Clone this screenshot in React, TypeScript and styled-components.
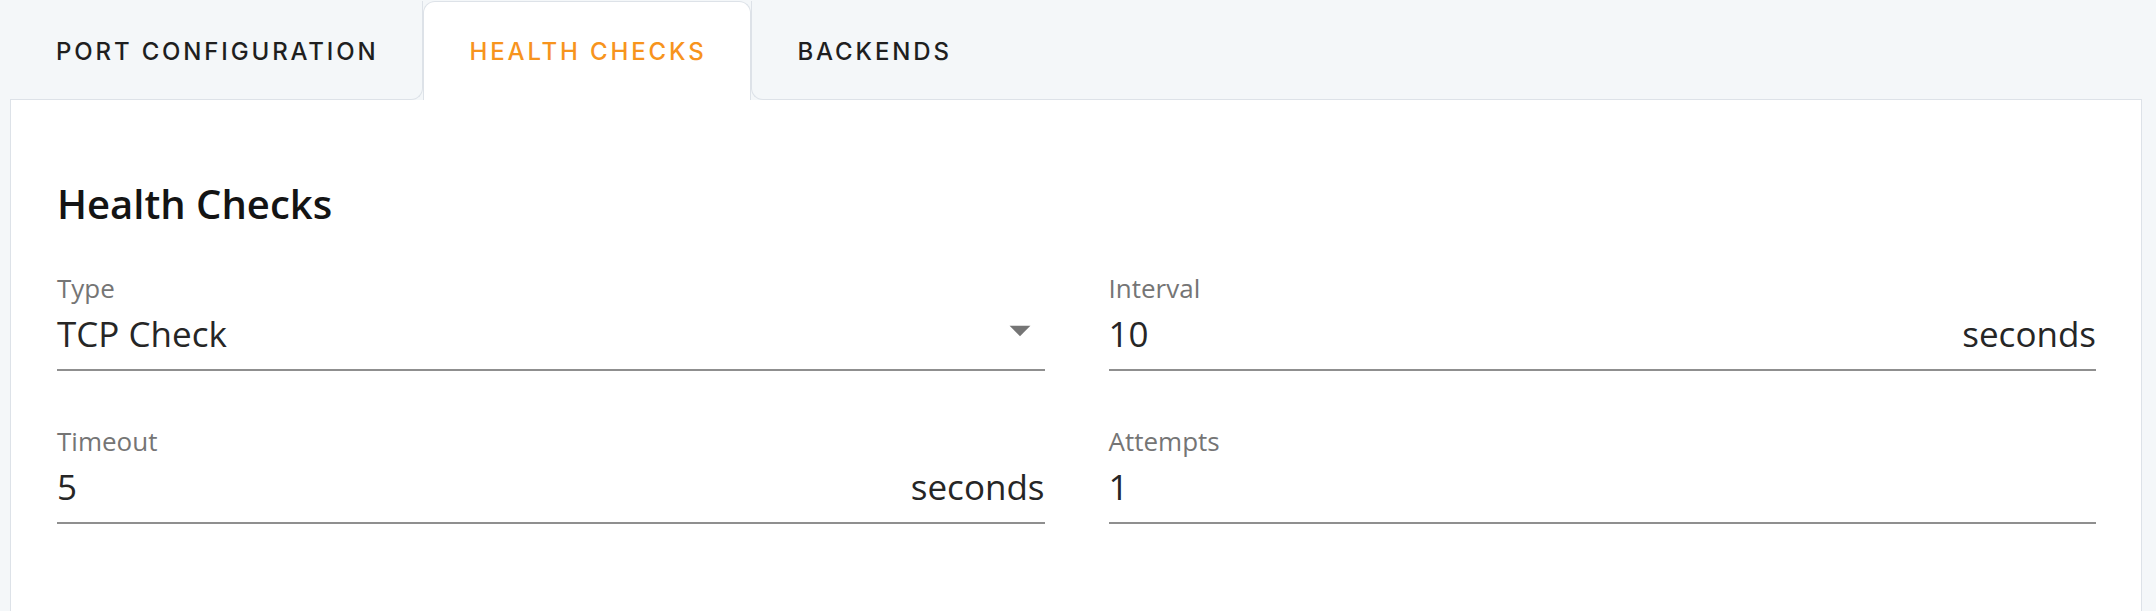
import React, { FC } from 'react';
import styled, { createGlobalStyle, css } from 'styled-components';

const colors = {
  page: '#f4f7f9',
  border: '#dde2e8',
  accent: '#f7941d',
  tabText: '#1f1f1f',
  heading: '#141414',
  value: '#262626',
  label: '#757575',
  underline: '#8f8f8f',
};

const GlobalStyle = createGlobalStyle`
  html, body {
    margin: 0;
    padding: 0;
    background: ${colors.page};
    overflow: hidden;
  }
  * {
    box-sizing: border-box;
  }
`;

const Page = styled.div`
  padding: 0 14px 0 10px;
  font-family: 'Open Sans', 'Noto Sans', sans-serif;
`;

const TabBar = styled.div`
  display: flex;
  height: 100px;
  padding-top: 1px;
`;

type TabProps = { $active?: boolean; $beforeActive?: boolean; $afterActive?: boolean };

const Tab = styled.div<TabProps>`
  height: 99px;
  padding: 37px 43px 0 46px;
  font-family: 'Inter', 'DejaVu Sans', sans-serif;
  font-size: 24px;
  font-weight: 500;
  line-height: 28px;
  letter-spacing: 2.85px;
  text-transform: uppercase;
  white-space: nowrap;
  color: ${colors.tabText};
  border-bottom: 1px solid ${colors.border};
  cursor: pointer;

  ${(p) =>
    p.$beforeActive &&
    css`
      border-right: 1px solid ${colors.border};
      border-bottom-right-radius: 12px;
    `}

  ${(p) =>
    p.$afterActive &&
    css`
      border-left: 1px solid ${colors.border};
      border-bottom-left-radius: 12px;
    `}

  ${(p) =>
    p.$active &&
    css`
      padding-top: 36px;
      background: #fff;
      color: ${colors.accent};
      border: 1px solid ${colors.border};
      border-bottom: none;
      border-radius: 12px 12px 0 0;
    `}
`;

const TabFiller = styled.div`
  flex: 1;
  border-bottom: 1px solid ${colors.border};
`;

const Panel = styled.div`
  min-height: 620px;
  background: #fff;
  border: 1px solid ${colors.border};
  border-top: none;
  padding: 80px 45px 0 46px;
`;

const Heading = styled.h2`
  margin: 0 0 47px;
  font-size: 40px;
  line-height: 48px;
  font-weight: 600;
  color: ${colors.heading};
`;

const FieldGrid = styled.div`
  display: grid;
  grid-template-columns: 1fr 1fr;
  column-gap: 64px;
  row-gap: 57px;
`;

const Field = styled.div`
  display: flex;
  flex-direction: column;
`;

const Label = styled.label`
  font-size: 26px;
  line-height: 26px;
  color: ${colors.label};
`;

const InputRow = styled.div`
  display: flex;
  align-items: center;
  margin-top: 12px;
  padding-bottom: 14px;
  border-bottom: 2px solid ${colors.underline};
  height: 58px;
`;

const Value = styled.span`
  flex: 1;
  font-size: 35px;
  line-height: 42px;
  color: ${colors.value};
`;

const Suffix = styled.span`
  font-size: 35px;
  line-height: 42px;
  color: ${colors.value};
`;

const DropIcon = styled.svg`
  width: 50px;
  height: 50px;
  margin: -8px 0 0;
  fill: ${colors.label};
  flex-shrink: 0;
`;

const ArrowDropDown: FC = () => (
  <DropIcon viewBox="0 0 24 24">
    <path d="M7 10l5 5 5-5z" />
  </DropIcon>
);

interface FieldDef {
  label: string;
  value: string;
  suffix?: string;
  select?: boolean;
}

const fields: FieldDef[] = [
  { label: 'Type', value: 'TCP Check', select: true },
  { label: 'Interval', value: '10', suffix: 'seconds' },
  { label: 'Timeout', value: '5', suffix: 'seconds' },
  { label: 'Attempts', value: '1' },
];

const tabs = ['Port Configuration', 'Health Checks', 'Backends'];
const activeTab = 1;

const App: FC = () => (
  <>
    <GlobalStyle />
    <Page>
      <TabBar>
        {tabs.map((t, i) => (
          <Tab
            key={t}
            $active={i === activeTab}
            $beforeActive={i === activeTab - 1}
            $afterActive={i === activeTab + 1}
          >
            {t}
          </Tab>
        ))}
        <TabFiller />
      </TabBar>
      <Panel>
        <Heading>Health Checks</Heading>
        <FieldGrid>
          {fields.map((f) => (
            <Field key={f.label}>
              <Label>{f.label}</Label>
              <InputRow>
                <Value>{f.value}</Value>
                {f.suffix && <Suffix>{f.suffix}</Suffix>}
                {f.select && <ArrowDropDown />}
              </InputRow>
            </Field>
          ))}
        </FieldGrid>
      </Panel>
    </Page>
  </>
);

export default App;
